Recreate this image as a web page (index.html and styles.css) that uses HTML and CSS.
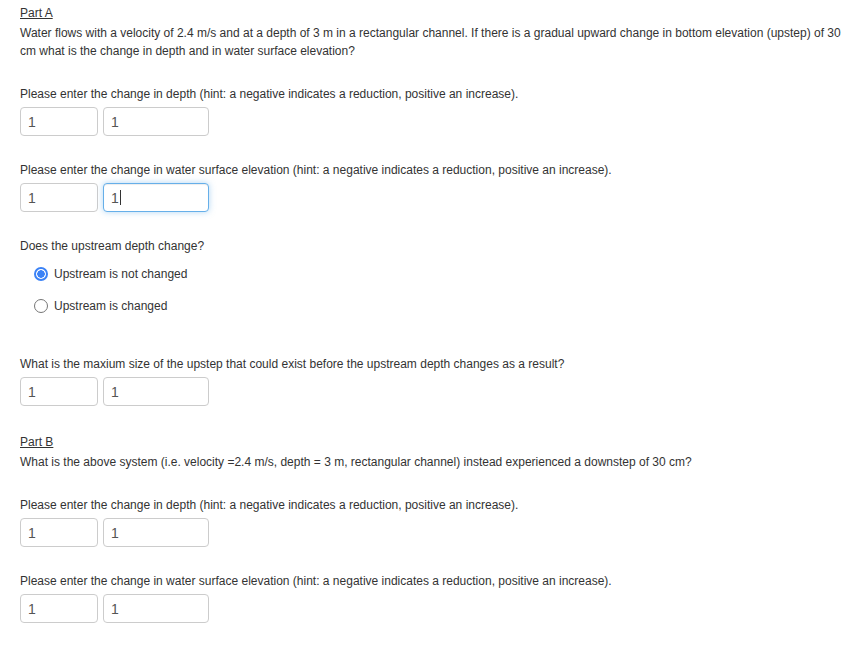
FILE: index.html
```html
<!DOCTYPE html>
<html>
<head>
<meta charset="utf-8">
<link rel="stylesheet" href="styles.css">
</head>
<body>
<div class="page">
  <div class="part-title">Part A</div>
  <p class="text intro">Water flows with a velocity of 2.4 m/s and at a depth of 3 m in a rectangular channel. If there is a gradual upward change in bottom elevation (upstep) of 30 cm what is the change in depth and in water surface elevation?</p>

  <div class="question">
    <p class="text">Please enter the change in depth (hint: a negative indicates a reduction, positive an increase).</p>
    <div class="inputs">
      <input class="field small" type="text" value="1">
      <input class="field large" type="text" value="1">
    </div>
  </div>

  <div class="question">
    <p class="text">Please enter the change in water surface elevation (hint: a negative indicates a reduction, positive an increase).</p>
    <div class="inputs">
      <input class="field small" type="text" value="1">
      <div class="field large focused">1<span class="caret"></span></div>
    </div>
  </div>

  <div class="question">
    <p class="text">Does the upstream depth change?</p>
    <div class="radios">
      <label class="radio"><span class="dot checked"></span>Upstream is not changed</label>
      <label class="radio"><span class="dot"></span>Upstream is changed</label>
    </div>
  </div>

  <div class="question far">
    <p class="text">What is the maxium size of the upstep that could exist before the upstream depth changes as a result?</p>
    <div class="inputs">
      <input class="field small" type="text" value="1">
      <input class="field large" type="text" value="1">
    </div>
  </div>

  <div class="part-b">
    <div class="part-title">Part B</div>
    <p class="text intro">What is the above system (i.e. velocity =2.4 m/s, depth = 3 m, rectangular channel) instead experienced a downstep of 30 cm?</p>
  </div>

  <div class="question">
    <p class="text">Please enter the change in depth (hint: a negative indicates a reduction, positive an increase).</p>
    <div class="inputs">
      <input class="field small" type="text" value="1">
      <input class="field large" type="text" value="1">
    </div>
  </div>

  <div class="question">
    <p class="text">Please enter the change in water surface elevation (hint: a negative indicates a reduction, positive an increase).</p>
    <div class="inputs">
      <input class="field small" type="text" value="1">
      <input class="field large" type="text" value="1">
    </div>
  </div>
</div>
</body>
</html>
```

FILE: styles.css
```css
html, body {
  margin: 0;
  padding: 0;
  background: #ffffff;
}

.page {
  padding: 4px 20px 0 20px;
  font-family: "Liberation Sans", Arial, Helvetica, sans-serif;
  font-size: 12px;
  line-height: 18px;
  color: #333333;
}

.part-title {
  text-decoration: underline;
  height: 18px;
}

.text {
  margin: 0;
}

.intro {
  margin-top: 2px;
}

.question {
  margin-top: 25px;
}

.question.far {
  margin-top: 40px;
}

.inputs {
  display: flex;
  gap: 5px;
  margin-top: 4px;
}

.field {
  box-sizing: border-box;
  height: 29px;
  border: 1px solid #cccccc;
  border-radius: 4px;
  padding: 0 7px;
  font-family: "Liberation Sans", Arial, Helvetica, sans-serif;
  font-size: 14px;
  color: #555555;
  background: #ffffff;
  margin: 0;
  outline: none;
}

div.field {
  display: flex;
  align-items: center;
}

.field.small {
  width: 78px;
}

.field.large {
  width: 106px;
}

.field.focused {
  border-color: #66afe9;
  box-shadow: inset 0 1px 1px rgba(0,0,0,0.075), 0 0 6px rgba(102,175,233,0.5);
}

.caret {
  display: inline-block;
  width: 1px;
  height: 15px;
  background: #333333;
  margin-left: 1px;
}

.radios {
  display: flex;
  flex-direction: column;
  gap: 14px;
  margin-top: 10px;
  padding-left: 14px;
}

.radio {
  display: flex;
  align-items: center;
  height: 18px;
}

.dot {
  box-sizing: border-box;
  width: 14px;
  height: 14px;
  border-radius: 50%;
  border: 1px solid #767676;
  background: #ffffff;
  margin-right: 6px;
}

.dot.checked {
  border: 2px solid #3b82f6;
  background: radial-gradient(circle, #3b82f6 0, #3b82f6 3.5px, #ffffff 4px);
}

.part-b {
  margin-top: 27px;
}
```
